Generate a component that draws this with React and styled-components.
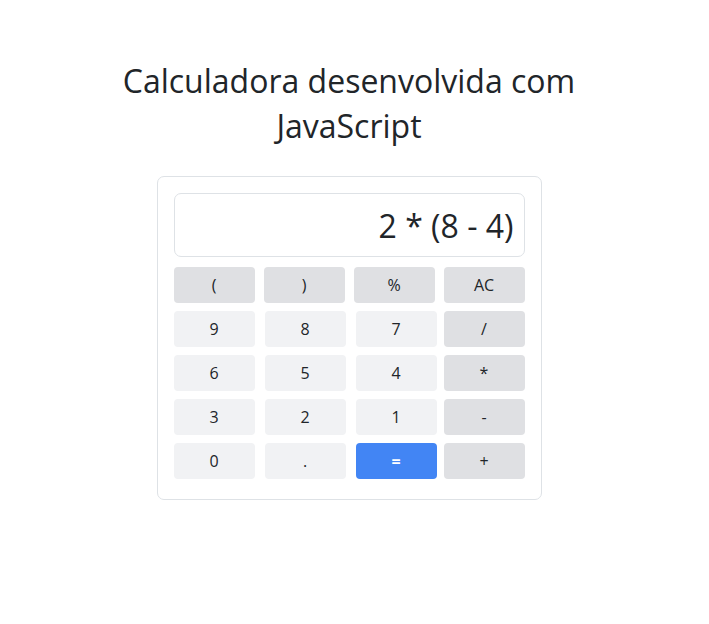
import React from "react";
import styled, { createGlobalStyle } from "styled-components";

const Global = createGlobalStyle`
  html, body { margin: 0; padding: 0; background: #fff; }
  body { font-family: "Open Sans", "Liberation Sans", sans-serif; color: #212529; }
`;

const Page = styled.main`
  display: flex;
  flex-direction: column;
  align-items: center;
  padding: 58px 11px 0 0;
`;

const Title = styled.h1`
  margin: 0 0 28px;
  width: 480px;
  text-align: center;
  font-weight: 400;
  font-size: 32px;
  line-height: 45px;
  color: #212529;
`;

const Card = styled.section`
  box-sizing: border-box;
  width: 385px;
  padding: 16px 16px 20px;
  border: 1px solid #dee2e6;
  border-radius: 7px;
  display: flex;
  flex-direction: column;
  gap: 10px;
`;

const Display = styled.div`
  box-sizing: border-box;
  height: 64px;
  border: 1px solid #dee2e6;
  border-radius: 7px;
  padding: 0 10px;
  display: flex;
  align-items: center;
  justify-content: flex-end;
  font-size: 32px;
  color: #212529;
`;

const Keys = styled.div`
  display: flex;
  flex-direction: column;
  gap: 8px;
`;

const TopRow = styled.div`
  display: grid;
  grid-template-columns: repeat(4, 81px);
  column-gap: 9px;
`;

const Row = styled.div`
  display: flex;
  gap: 7px;
`;

const Digits = styled.div`
  display: grid;
  grid-template-columns: repeat(3, 81px);
  column-gap: 10px;
`;

const bg = { op: "#dfe0e3", num: "#f1f2f4", eq: "#4285f4" };

const Key = styled.button`
  width: 81px;
  height: 36px;
  border: none;
  border-radius: 4px;
  background: ${(p) => bg[p.$kind]};
  color: ${(p) => (p.$kind === "eq" ? "#fff" : "#212529")};
  font-family: "Open Sans", "Liberation Sans", sans-serif;
  font-size: 16px;
  font-weight: ${(p) => (p.$kind === "eq" ? 700 : 400)};
  padding: 0;
  cursor: pointer;
`;

const rows = [
  [["9", "num"], ["8", "num"], ["7", "num"], ["/", "op"]],
  [["6", "num"], ["5", "num"], ["4", "num"], ["*", "op"]],
  [["3", "num"], ["2", "num"], ["1", "num"], ["-", "op"]],
  [["0", "num"], [".", "num"], ["=", "eq"], ["+", "op"]],
];

export default function App() {
  return (
    <>
      <Global />
      <Page>
        <Title>Calculadora desenvolvida com JavaScript</Title>
        <Card>
          <Display>2 * (8 - 4)</Display>
          <Keys>
            <TopRow>
              {["(", ")", "%", "AC"].map((l) => (
                <Key key={l} $kind="op">{l}</Key>
              ))}
            </TopRow>
            {rows.map((row, i) => {
              const [op] = row.slice(3);
              return (
                <Row key={i}>
                  <Digits>
                    {row.slice(0, 3).map(([l, k]) => (
                      <Key key={l} $kind={k}>{l}</Key>
                    ))}
                  </Digits>
                  <Key $kind={op[1]}>{op[0]}</Key>
                </Row>
              );
            })}
          </Keys>
        </Card>
      </Page>
    </>
  );
}
